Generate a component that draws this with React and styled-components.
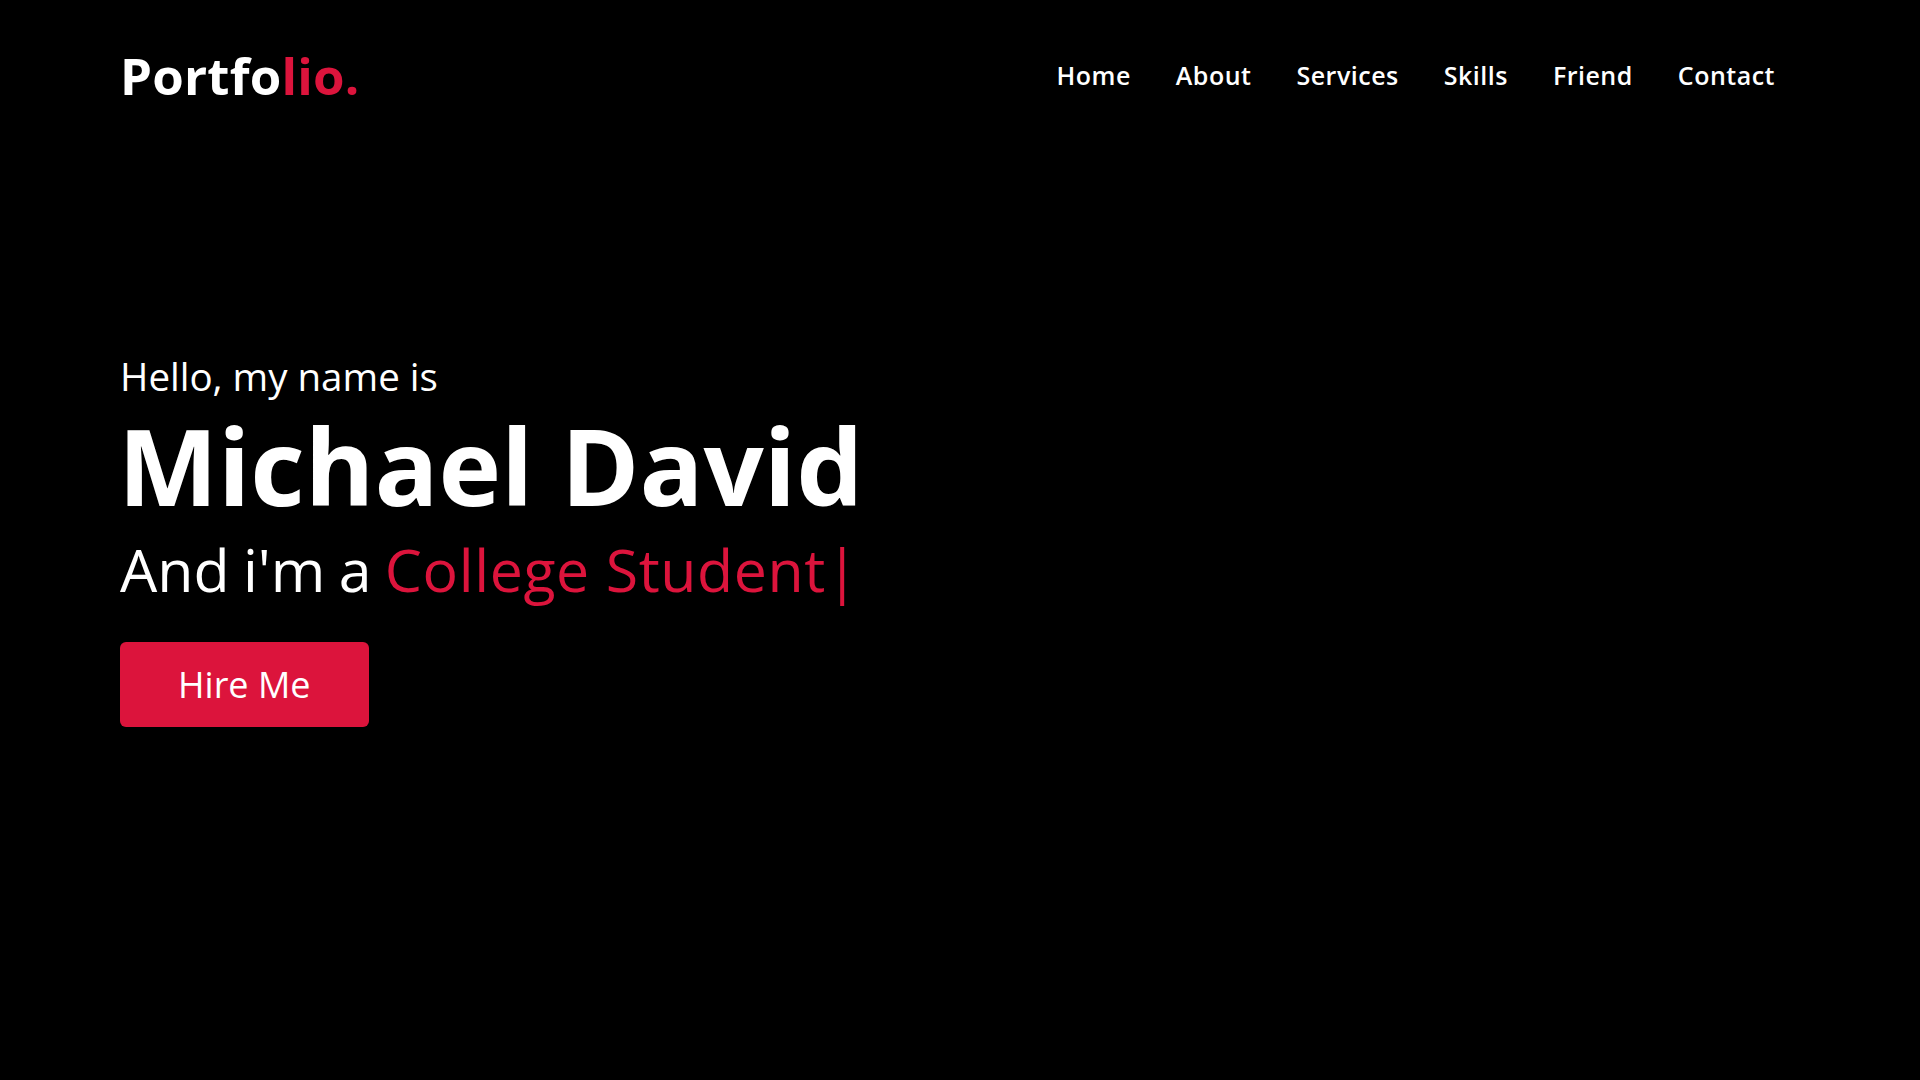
import React from 'react';
import styled, { createGlobalStyle } from 'styled-components';

const accent = '#dc143c';

const GlobalStyle = createGlobalStyle`
  *, *::before, *::after { box-sizing: border-box; }
  html, body {
    margin: 0;
    padding: 0;
    background: #000;
    color: #fff;
    font-family: "Open Sans", "Noto Sans", sans-serif;
  }
`;

// the reference leaves room for a 25px page scrollbar on the right
const Home = styled.section`
  height: 100vh;
  padding: 0 145px 0 120px;
  display: grid;
  grid-template-rows: 150px 1fr 150px;
`;

const Navbar = styled.nav`
  display: flex;
  align-items: center;
  justify-content: space-between;
`;

const Logo = styled.a`
  font-size: 51px;
  font-weight: 700;
  letter-spacing: 0.2px;
  line-height: 1;
  color: #fff;
  text-decoration: none;
  span { color: ${accent}; }
`;

const Menu = styled.ul`
  display: flex;
  gap: 45px;
  margin: 0;
  padding: 0;
  list-style: none;
`;

const MenuLink = styled.a`
  font-size: 25px;
  font-weight: 600;
  letter-spacing: 0.5px;
  color: #fff;
  text-decoration: none;
`;

const HeroText = styled.div`
  align-self: center;
  display: flex;
  flex-direction: column;
  align-items: flex-start;
`;

const Greeting = styled.div`
  font-size: 38.5px;
  font-weight: 400;
  line-height: 1.2;
`;

const Name = styled.h1`
  margin: 0 0 0 -2px;
  font-size: 106px;
  font-weight: 700;
  line-height: 1.25;
`;

const Role = styled.div`
  margin-top: 3px;
  font-size: 59px;
  font-weight: 400;
  line-height: 1.2;
  word-spacing: -2px;
`;

const Typed = styled.span`
  color: ${accent};
  letter-spacing: 0.6px;
  word-spacing: 0;
`;

const Cursor = styled.span`
  color: ${accent};
`;

const HireButton = styled.a`
  margin-top: 37px;
  height: 85px;
  padding: 0 58px;
  display: inline-flex;
  align-items: center;
  background: ${accent};
  border-radius: 6px;
  color: #fff;
  font-size: 36px;
  font-weight: 400;
  text-decoration: none;
`;

const links = ['Home', 'About', 'Services', 'Skills', 'Friend', 'Contact'];

export default function App() {
  return (
    <>
      <GlobalStyle />
      <Home id="home">
        <Navbar>
          <Logo href="#home">Portfo<span>lio.</span></Logo>
          <Menu>
            {links.map((l) => (
              <li key={l}><MenuLink href={`#${l.toLowerCase()}`}>{l}</MenuLink></li>
            ))}
          </Menu>
        </Navbar>
        <HeroText>
          <Greeting>Hello, my name is</Greeting>
          <Name>Michael David</Name>
          <Role>And i'm a <Typed>College Student</Typed><Cursor>|</Cursor></Role>
          <HireButton href="#contact">Hire Me</HireButton>
        </HeroText>
      </Home>
    </>
  );
}
